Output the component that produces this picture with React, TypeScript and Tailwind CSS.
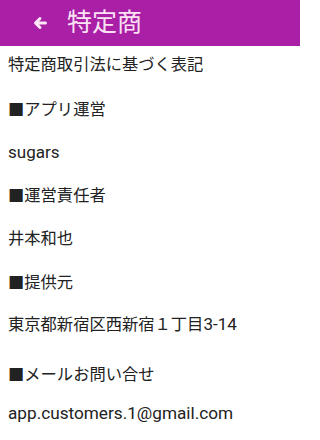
import React from "react";

export default function App() {
  const font = { fontFamily: 'Roboto, "Noto Sans CJK JP", sans-serif' };
  return (
    <div className="w-[300px] h-[440px] bg-white overflow-hidden" style={font}>
      <div className="h-[46px] bg-[#a91fa6] flex items-center">
        <svg className="ml-[33px]" width="14" height="14" viewBox="0 0 14 14">
          <path d="M12.5 7H3M7 2.5L2.5 7L7 11.5" stroke="#fbe6f6" strokeWidth="3" fill="none" strokeLinecap="round" strokeLinejoin="round" />
        </svg>
        <div className="ml-[20px] text-[25px] leading-[30px] text-[#fbe2f4]">特定商</div>
      </div>
      <div className="pl-[8px] text-[16.3px] leading-[20px] text-[#222222]">
        <div className="mt-[9px]">特定商取引法に基づく表記</div>
        <div className="mt-[25px]">■アプリ運営</div>
        <div className="mt-[22px] text-[17px]">sugars</div>
        <div className="mt-[24px]">■運営責任者</div>
        <div className="mt-[23px]">井本和也</div>
        <div className="mt-[24px]">■提供元</div>
        <div className="mt-[21px]">東京都新宿区西新宿１丁目<span className="text-[17px]">3-14</span></div>
        <div className="mt-[30px]">■メールお問い合せ</div>
        <div className="mt-[18px] text-[17.2px]">app.customers.1@gmail.com</div>
      </div>
    </div>
  );
}
